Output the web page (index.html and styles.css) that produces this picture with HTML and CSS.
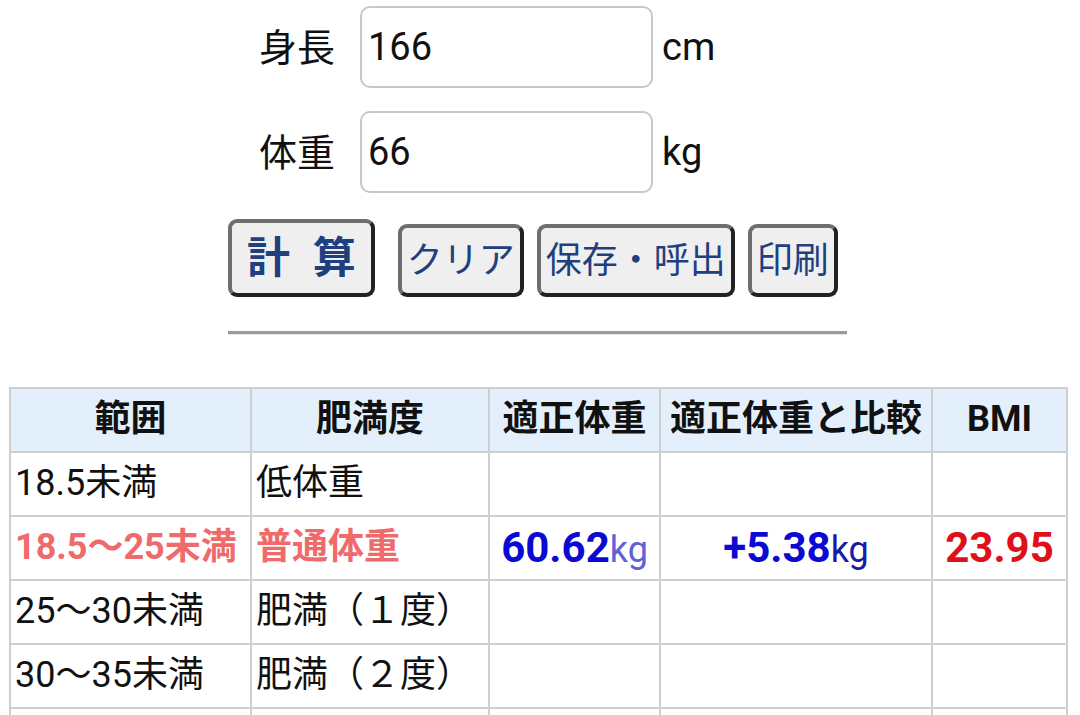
FILE: index.html
```html
<!DOCTYPE html>
<html lang="ja">
<head>
<meta charset="utf-8">
<link rel="stylesheet" href="styles.css">
</head>
<body>
<div class="calc">
  <div class="field">
    <label class="label">身長</label>
    <input class="input" type="text" value="166">
    <span class="unit">cm</span>
  </div>
  <div class="field">
    <label class="label">体重</label>
    <input class="input" type="text" value="66">
    <span class="unit">kg</span>
  </div>
  <div class="buttons">
    <button class="btn btn-main">計 算</button>
    <button class="btn">クリア</button>
    <button class="btn">保存・呼出</button>
    <button class="btn">印刷</button>
  </div>
  <hr class="rule">
</div>
<table class="bmi">
  <thead>
    <tr>
      <th class="c1">範囲</th>
      <th class="c2">肥満度</th>
      <th class="c3">適正体重</th>
      <th class="c4">適正体重と比較</th>
      <th class="c5">BMI</th>
    </tr>
  </thead>
  <tbody>
    <tr><td>18.5未満</td><td>低体重</td><td></td><td></td><td></td></tr>
    <tr class="hit">
      <td class="hl">18.5～25未満</td>
      <td class="hl">普通体重</td>
      <td class="center"><span class="num">60.62</span><span class="kg1">kg</span></td>
      <td class="center"><span class="num">+5.38</span><span class="kg2">kg</span></td>
      <td class="center"><span class="bmival">23.95</span></td>
    </tr>
    <tr><td>25～30未満</td><td>肥満（１度）</td><td></td><td></td><td></td></tr>
    <tr><td>30～35未満</td><td>肥満（２度）</td><td></td><td></td><td></td></tr>
    <tr><td></td><td></td><td></td><td></td><td></td></tr>
  </tbody>
</table>
</body>
</html>
```
FILE: styles.css
```css
html, body {
  margin: 0;
  padding: 0;
  background: #fff;
}
body {
  font-family: Roboto, "Noto Sans CJK JP", sans-serif;
  color: #111;
  padding: 6px 8px 0 9px;
}
.calc {
  width: 620px;
  margin: 0 auto 0 219px;
}
.field {
  display: flex;
  align-items: center;
  padding-left: 31px;
}
.field + .field {
  margin-top: 23px;
}
.label {
  font-size: 38px;
  width: 79px;
  margin-right: 22px;
  padding-bottom: 6px;
  white-space: nowrap;
}
.input {
  box-sizing: border-box;
  width: 293px;
  height: 82px;
  border: 2px solid #c8c8c8;
  border-radius: 10px;
  font-family: Roboto, "Noto Sans CJK JP", sans-serif;
  font-size: 38px;
  color: #111;
  padding: 0 6px;
  margin: 0;
  outline: none;
}
.unit {
  font-size: 38px;
  margin-left: 9px;
}
.buttons {
  display: flex;
  align-items: flex-end;
  gap: 13px;
  margin-top: 26px;
}
.btn {
  font-family: Roboto, "Noto Sans CJK JP", sans-serif;
  font-size: 36px;
  color: #1f3f7f;
  background: #efefef;
  border: 4px solid;
  border-color: #6e6e6e #222 #222 #6e6e6e;
  border-radius: 9px;
  height: 73px;
  padding: 0 5px;
  margin: 0;
  line-height: 1;
}
.btn-main {
  font-size: 43px;
  font-weight: bold;
  height: 78px;
  padding: 0 15px;
  word-spacing: 12px;
  margin-right: 10px;
}
.rule {
  border: none;
  border-top: 3px solid #9a9a9a;
  border-bottom: 1px solid #e4e4e4;
  margin: 34px 0 0 0;
  width: 619px;
}
.bmi {
  border-collapse: collapse;
  margin-top: 52px;
  font-size: 36px;
  table-layout: fixed;
}
.bmi th, .bmi td {
  border: 2px solid #cfcfcf;
  height: 64px;
  padding: 0 4px;
  white-space: nowrap;
  line-height: 1.2;
  box-sizing: border-box;
}
.bmi th {
  background: #e4effc;
  font-weight: bold;
  text-align: center;
}
.c1 { width: 241px; }
.c2 { width: 238px; }
.c3 { width: 171px; }
.c4 { width: 272px; }
.c5 { width: 135px; }
.hl {
  color: #ef6b6b;
  font-weight: bold;
}
.center { text-align: center; }
.num {
  color: #0a0ad2;
  font-weight: bold;
  font-size: 42px;
}
.kg1 { color: #6060d8; }
.kg2 { color: #1a1aa8; }
.bmival {
  color: #e0101a;
  font-weight: bold;
  font-size: 42px;
}
```
